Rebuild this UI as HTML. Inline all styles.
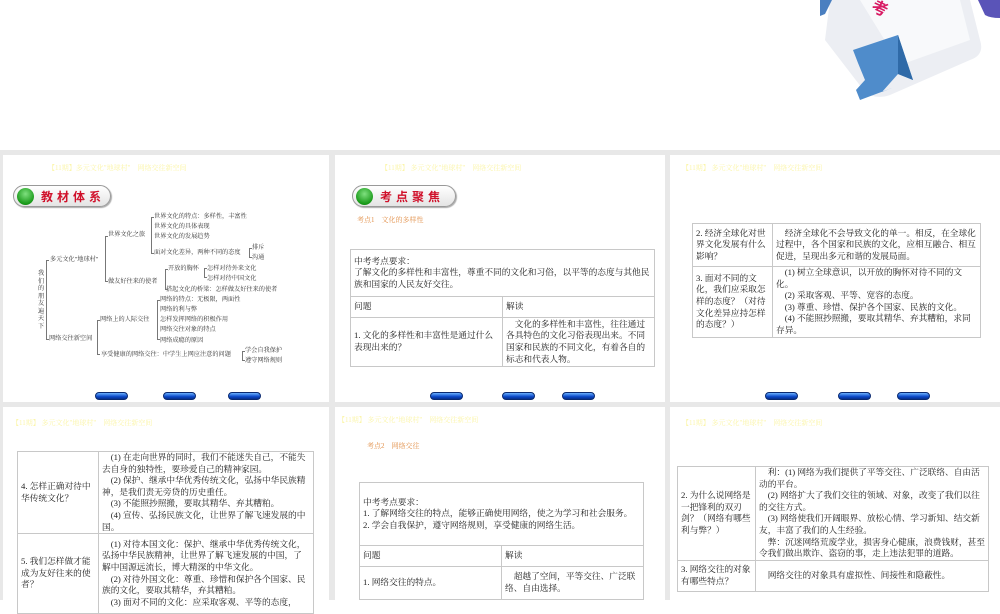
<!DOCTYPE html>
<html><head><meta charset="utf-8"><style>
*{margin:0;padding:0;box-sizing:border-box}
body{width:1000px;height:600px;overflow:hidden;background:#fff;position:relative;font-family:"Liberation Serif","Noto Serif CJK SC","Noto Sans CJK SC",serif;color:#222}
.grid{position:absolute;left:0;top:150px;width:1000px;height:450px;background:#e8e8e8}
.s{position:absolute;background:#fff;overflow:hidden}
.hd{position:absolute;font-size:7px;color:#fbf5a8;white-space:nowrap}
.pill{position:absolute;width:98px;height:22px;border:1px solid #999;border-radius:11px;background:linear-gradient(#fff,#e4e4e4);box-shadow:1px 1px 1px #aaa}
.pill i{position:absolute;left:3px;top:2px;width:17px;height:17px;border-radius:50%;background:radial-gradient(circle at 50% 35%,#7fe07f,#1a9a1a 70%,#0c6d0c)}
.pill b{position:absolute;left:27px;top:3px;font-size:12px;color:#d0102a;letter-spacing:4px;font-family:"Noto Sans CJK SC",sans-serif;line-height:15px;white-space:nowrap}
.btn{position:absolute;width:33px;height:8px;border-radius:4px;background:linear-gradient(#6ab0ff,#0a48c8 60%,#062e8c);border:1px solid #0a2a70}
.t{position:absolute;font-size:6.2px;white-space:nowrap;color:#333;line-height:6.5px}
table{position:absolute;border-collapse:collapse;font-size:8.7px;line-height:11.6px;color:#222}
td{border:1px solid #c8c8c8;padding:0 3px;vertical-align:middle}
.or{position:absolute;font-size:7px;color:#e2904a;white-space:nowrap}
.br{position:absolute;border-left:1px solid #777;border-top:1px solid #777;border-bottom:1px solid #777;width:3px}
</style></head><body>
<svg style="position:absolute;left:820px;top:0" width="180" height="150">
<path d="M10 0 L150 0 L160 40 Q165 55 150 60 L70 95 Q55 100 45 92 L5 40 Z" fill="#eceef3"/>
<path d="M40 0 L140 0 L150 40 L80 65 Z" fill="#f8f9fb"/>
<path d="M0 0 L12 0 L5 14 L0 16Z" fill="#4a7fc0"/>
<path d="M158 0 L180 0 L180 18 Q170 18 165 15 Z" fill="#5a54b8"/>
<text x="52" y="14" font-size="16" fill="#d81a63" font-weight="bold" font-family="Noto Sans CJK SC,sans-serif" transform="rotate(25 60 8)">考</text>
<path d="M33 50 L78 35 L93 80 L78 74 L62 92 L72 88 L40 100 L36 90 L45 80 L38 63 Z" fill="#4f8ccb"/>
<path d="M78 35 L93 80 L78 74 Z" fill="#2f6aa8"/>
</svg>
<div class="grid"></div>

<!-- slide 1 -->
<div class="s" style="left:3px;top:155px;width:326px;height:247px"></div>
<div class="hd" style="left:48px;top:163px">【11期】多元文化"地球村"　网络交往新空间</div>
<div class="pill" style="left:13px;top:185px"><i></i><b>教材体系</b></div>
<div class="t" style="left:154px;top:214px">世界文化的特点：多样性，丰富性</div>
<div class="t" style="left:154px;top:224px">世界文化的具体表现</div>
<div class="t" style="left:154px;top:234px">世界文化的发展趋势</div>
<div class="t" style="left:108px;top:232px">世界文化之旅</div>
<div class="t" style="left:154px;top:250px">面对文化差异，两种不同的态度</div>
<div class="t" style="left:252px;top:245px">排斥</div>
<div class="t" style="left:252px;top:255px">沟通</div>
<div class="t" style="left:50px;top:257px">多元文化"地球村"</div>
<div class="t" style="left:168px;top:266px">开放的胸怀</div>
<div class="t" style="left:207px;top:266px">怎样对待外来文化</div>
<div class="t" style="left:207px;top:276px">怎样对待中国文化</div>
<div class="t" style="left:108px;top:279px">做友好往来的使者</div>
<div class="t" style="left:166px;top:287px">搭起文化的桥梁：怎样做友好往来的使者</div>
<div class="t" style="left:38px;top:270px;width:7px;white-space:normal;line-height:7.5px">我们的朋友遍天下</div>
<div class="t" style="left:160px;top:297px">网络的特点：无极限，两面性</div>
<div class="t" style="left:160px;top:307px">网络的利与弊</div>
<div class="t" style="left:100px;top:317px">网络上的人际交往</div>
<div class="t" style="left:160px;top:317px">怎样发挥网络的积极作用</div>
<div class="t" style="left:160px;top:327px">网络交往对象的特点</div>
<div class="t" style="left:160px;top:338px">网络成瘾的原因</div>
<div class="t" style="left:49px;top:336px">网络交往新空间</div>
<div class="t" style="left:101px;top:352px">享受健康的网络交往：中学生上网应注意的问题</div>
<div class="t" style="left:245px;top:348px">学会自我保护</div>
<div class="t" style="left:245px;top:358px">遵守网络规则</div>
<div class="br" style="left:46px;top:260px;height:80px"></div>
<div class="br" style="left:105px;top:236px;height:46px"></div>
<div class="br" style="left:151px;top:217px;height:37px"></div>
<div class="br" style="left:249px;top:248px;height:10px"></div>
<div class="br" style="left:165px;top:269px;height:21px"></div>
<div class="br" style="left:204px;top:268px;height:10px"></div>
<div class="br" style="left:97px;top:320px;height:35px"></div>
<div class="br" style="left:157px;top:300px;height:40px"></div>
<div class="br" style="left:242px;top:351px;height:10px"></div>
<div class="btn" style="left:95px;top:392px"></div><div class="btn" style="left:163px;top:392px"></div><div class="btn" style="left:228px;top:392px"></div>

<!-- slide 2 -->
<div class="s" style="left:335px;top:155px;width:330px;height:247px"></div>
<div class="hd" style="left:381px;top:163px">【11期】 多元文化"地球村"　网络交往新空间</div>
<div class="pill" style="left:352px;top:185px;width:104px"><i></i><b>考点聚焦</b></div>
<div class="or" style="left:357px;top:215px">考点1　文化的多样性</div>
<table style="left:350px;top:249px;width:305px">
<tr style="height:47px"><td colspan="2">中考考点要求：<br>了解文化的多样性和丰富性，尊重不同的文化和习俗，以平等的态度与其他民族和国家的人民友好交往。</td></tr>
<tr style="height:21px"><td style="width:152px">问题</td><td>解读</td></tr>
<tr style="height:49px"><td>1. 文化的多样性和丰富性是通过什么表现出来的？</td><td>　文化的多样性和丰富性，往往通过各具特色的文化习俗表现出来。不同国家和民族的不同文化，有着各自的标志和代表人物。</td></tr>
</table>
<div class="btn" style="left:430px;top:392px"></div><div class="btn" style="left:502px;top:392px"></div><div class="btn" style="left:562px;top:392px"></div>

<!-- slide 3 -->
<div class="s" style="left:670px;top:155px;width:330px;height:247px"></div>
<div class="hd" style="left:682px;top:163px">【11期】 多元文化"地球村"　网络交往新空间</div>
<table style="left:692px;top:223px;width:289px">
<tr style="height:43px"><td style="width:80px">2. 经济全球化对世界文化发展有什么影响？</td><td>　经济全球化不会导致文化的单一。相反，在全球化过程中，各个国家和民族的文化，应相互融合、相互促进，呈现出多元和谐的发展局面。</td></tr>
<tr style="height:67px"><td>3. 面对不同的文化，我们应采取怎样的态度？（对待文化差异应持怎样的态度？）</td><td>　(1) 树立全球意识，以开放的胸怀对待不同的文化。<br>　(2) 采取客观、平等、宽容的态度。<br>　(3) 尊重、珍惜、保护各个国家、民族的文化。<br>　(4) 不能照抄照搬，要取其精华、弃其糟粕，求同存异。</td></tr>
</table>
<div class="btn" style="left:765px;top:392px"></div><div class="btn" style="left:838px;top:392px"></div><div class="btn" style="left:897px;top:392px"></div>

<!-- row 2 slide 1 -->
<div class="s" style="left:3px;top:407px;width:326px;height:193px"></div>
<div class="hd" style="left:12px;top:418px">【11期】 多元文化"地球村"　网络交往新空间</div>
<table style="left:17px;top:451px;width:297px">
<tr style="height:77px"><td style="width:81px">4. 怎样正确对待中华传统文化？</td><td>　(1) 在走向世界的同时，我们不能迷失自己，不能失去自身的独特性，要珍爱自己的精神家园。<br>　(2) 保护、继承中华优秀传统文化，弘扬中华民族精神，是我们责无旁贷的历史重任。<br>　(3) 不能照抄照搬，要取其精华、弃其糟粕。<br>　(4) 宣传、弘扬民族文化，让世界了解飞速发展的中国。</td></tr>
<tr style="height:80px"><td>5. 我们怎样做才能成为友好往来的使者？</td><td>　(1) 对待本国文化：保护、继承中华优秀传统文化，弘扬中华民族精神，让世界了解飞速发展的中国，了解中国源远流长，博大精深的中华文化。<br>　(2) 对待外国文化：尊重、珍惜和保护各个国家、民族的文化，要取其精华，弃其糟粕。<br>　(3) 面对不同的文化：应采取客观、平等的态度，</td></tr>
</table>

<!-- row 2 slide 2 -->
<div class="s" style="left:335px;top:407px;width:330px;height:193px"></div>
<div class="hd" style="left:338px;top:415px">【11期】 多元文化"地球村"　网络交往新空间</div>
<div class="or" style="left:367px;top:441px">考点2　网络交往</div>
<table style="left:359px;top:482px;width:285px">
<tr style="height:63px"><td colspan="2">中考考点要求：<br>1. 了解网络交往的特点，能够正确使用网络，使之为学习和社会服务。<br>2. 学会自我保护，遵守网络规则，享受健康的网络生活。</td></tr>
<tr style="height:21px"><td style="width:142px">问题</td><td>解读</td></tr>
<tr style="height:33px"><td>1. 网络交往的特点。</td><td>　超越了空间，平等交往、广泛联络、自由选择。</td></tr>
</table>

<!-- row 2 slide 3 -->
<div class="s" style="left:670px;top:407px;width:330px;height:193px"></div>
<div class="hd" style="left:682px;top:418px">【11期】 多元文化"地球村"　网络交往新空间</div>
<table style="left:677px;top:466px;width:312px">
<tr style="height:89px"><td style="width:78px">2. 为什么说网络是一把锋利的双刃剑？（网络有哪些利与弊？）</td><td>　利：(1) 网络为我们提供了平等交往、广泛联络、自由活动的平台。<br>　(2) 网络扩大了我们交往的领域、对象，改变了我们以往的交往方式。<br>　(3) 网络使我们开阔眼界、放松心情、学习新知、结交新友，丰富了我们的人生经验。<br>　弊：沉迷网络荒废学业，损害身心健康，浪费钱财，甚至令我们做出欺诈、盗窃的事，走上违法犯罪的道路。</td></tr>
<tr style="height:31px"><td>3. 网络交往的对象有哪些特点？</td><td>　网络交往的对象具有虚拟性、间接性和隐蔽性。</td></tr>
</table>
</body></html>
